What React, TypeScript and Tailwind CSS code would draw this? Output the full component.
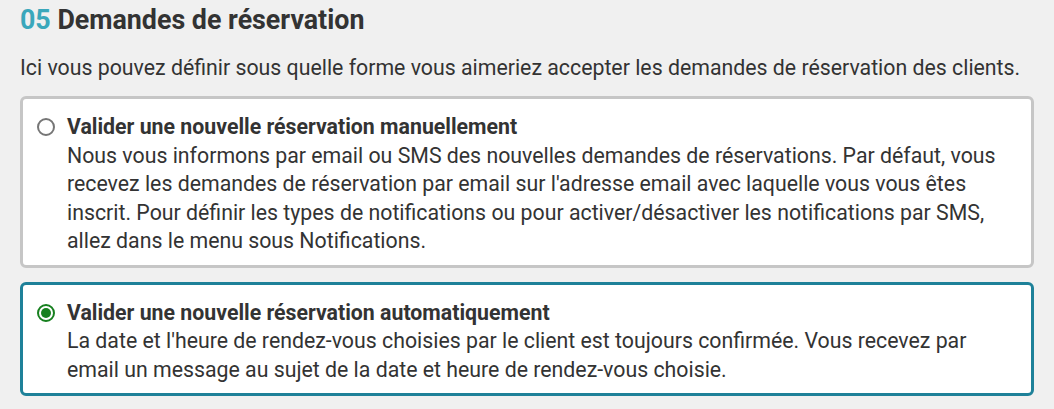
import { useState } from 'react';

type Option = {
  id: string;
  title: string;
  text: string;
};

const OPTIONS: Option[] = [
  {
    id: 'manual',
    title: 'Valider une nouvelle réservation manuellement',
    text: "Nous vous informons par email ou SMS des nouvelles demandes de réservations. Par défaut, vous recevez les demandes de réservation par email sur l'adresse email avec laquelle vous vous êtes inscrit. Pour définir les types de notifications ou pour activer/désactiver les notifications par SMS, allez dans le menu sous Notifications."
  },
  {
    id: 'auto',
    title: 'Valider une nouvelle réservation automatiquement',
    text: "La date et l'heure de rendez-vous choisies par le client est toujours confirmée. Vous recevez par email un message au sujet de la date et heure de rendez-vous choisie."
  }
];

function Radio({ checked }: { checked: boolean }) {
  return (
    <span
      className={`mt-[5px] flex h-[18px] w-[18px] shrink-0 items-center justify-center rounded-full border-2 bg-white ${
        checked ? 'border-[#17801f]' : 'border-[#767676]'
      }`}
    >
      {checked ? <span className="h-[10px] w-[10px] rounded-full bg-[#17801f]" /> : null}
    </span>
  );
}

export default function App() {
  const [selected, setSelected] = useState('auto');

  return (
    <div className="min-h-screen bg-[#f0f0f0] px-5 pt-[2px] font-['Roboto',sans-serif] text-[#333333]">
      <h2 className="text-[26.8px] font-bold leading-[36px]">
        <span className="text-[#3aa7bb]">05</span> Demandes de réservation
      </h2>
      <p className="mt-[16px] text-[21.3px] leading-[28px]">
        Ici vous pouvez définir sous quelle forme vous aimeriez accepter les demandes de réservation des clients.
      </p>

      <div className="mt-[14px] flex flex-col gap-[14px]">
        {OPTIONS.map((option) => {
          const checked = selected === option.id;
          return (
            <label
              key={option.id}
              onClick={() => setSelected(option.id)}
              className={`flex cursor-pointer gap-[12px] rounded-[6px] border-[3px] bg-white pb-[9px] pl-[14px] pr-[12px] pt-[14px] ${
                checked ? 'border-[#1e8199]' : 'border-[#c6c6c6]'
              }`}
            >
              <Radio checked={checked} />
              <div className="text-[21.3px] leading-[28.5px]">
                <div className="font-bold">{option.title}</div>
                <div>{option.text}</div>
              </div>
            </label>
          );
        })}
      </div>
    </div>
  );
}
